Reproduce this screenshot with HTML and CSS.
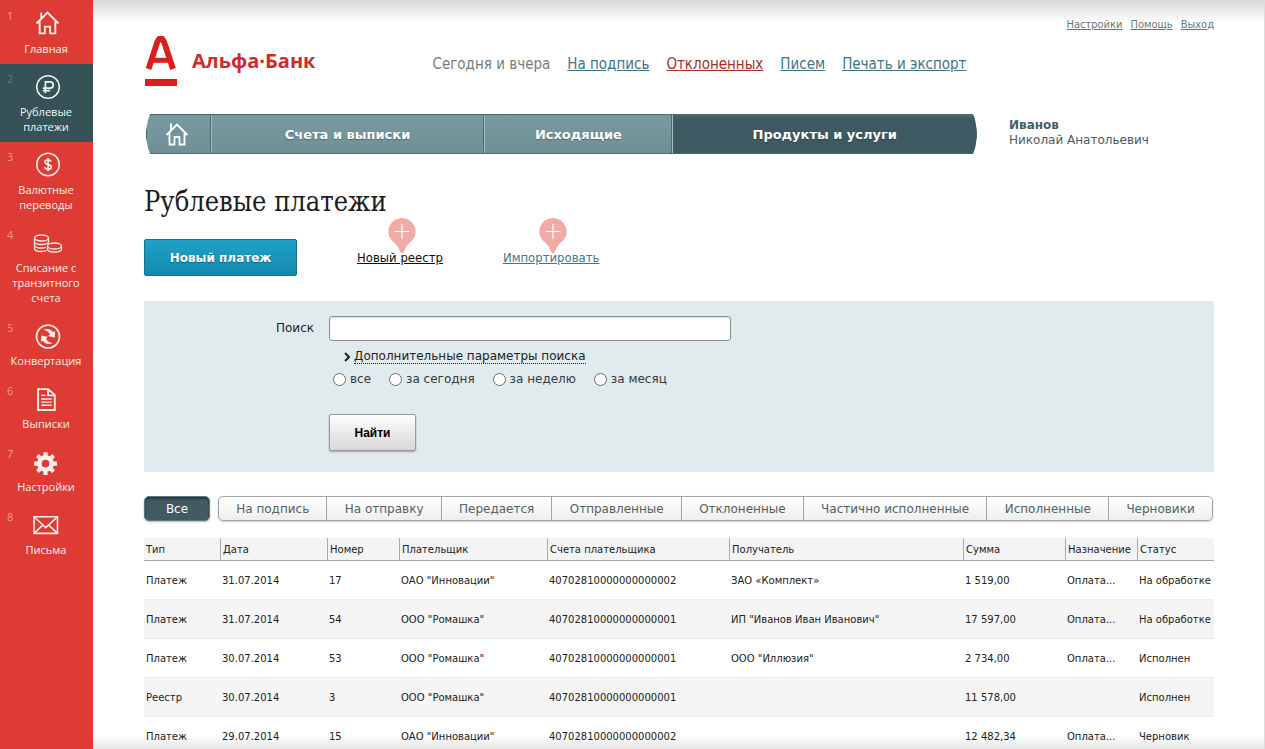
FILE: index.html
```html
<!DOCTYPE html>
<html lang="ru">
<head>
<meta charset="utf-8">
<title>Рублевые платежи</title>
<link rel="stylesheet" href="styles.css">
</head>
<body>
<div class="app">
  <nav class="sidebar" aria-label="Разделы">
    <a class="side-item" href="#"><span class="side-num">1</span>
      <svg class="side-icon" viewBox="0 0 24 24"><path d="M1.500 12 12 1.500 22.500 12M6 7V1.500M4.500 10v11.500h5V15h5v6.500h5V10" fill="none" stroke="currentColor" stroke-width="1.800"/></svg>
      Главная</a>
    <a class="side-item side-item-active" href="#"><span class="side-num">2</span>
      <svg class="side-icon" viewBox="0 0 24 24"><g fill="none" stroke="currentColor"><circle cx="12.500" cy="12.500" r="10.800" stroke-width="1.400"/><path d="M10 18.500v-11h4.500a2.900 2.900 0 0 1 0 6h-7M7.500 16h7" stroke-width="1.600"/></g></svg>
      Рублевые платежи</a>
    <a class="side-item" href="#"><span class="side-num">3</span>
      <svg class="side-icon" viewBox="0 0 24 24"><g fill="none" stroke="currentColor"><circle cx="12.500" cy="12" r="10.800" stroke-width="1.400"/><path d="M15.500 9.300C15 8 14 7.500 12.500 7.500c-1.800 0-3 .8-3 2.200 0 3.200 6.200 1.400 6.200 4.600 0 1.400-1.300 2.200-3.200 2.200-1.700 0-2.900-.6-3.300-2M12.500 5.500v13" stroke-width="1.600"/></g></svg>
      Валютные переводы</a>
    <a class="side-item" href="#"><span class="side-num">4</span>
      <svg class="side-icon side-icon-wide" viewBox="0 0 30 24"><g fill="none" stroke="currentColor" stroke-width="1.300"><ellipse cx="8.500" cy="7.500" rx="7" ry="3"/><path d="M1.500 7.500V11c0 1.700 3.100 3 7 3s7-1.300 7-3V7.500M1.500 11v3.500c0 1.700 3.100 3 7 3 1.700 0 3.300-.3 4.500-.7M1.500 14.500V18c0 1.700 3.100 3 7 3 2 0 3.700-.4 5-1M15.500 11v2"/><ellipse cx="21.500" cy="15.500" rx="7" ry="3"/><path d="M14.500 15.500v3c0 1.700 3.100 3 7 3s7-1.300 7-3v-3"/></g></svg>
      Списание с транзитного счета</a>
    <a class="side-item" href="#"><span class="side-num">5</span>
      <svg class="side-icon" viewBox="0 -1 24 24"><circle cx="12.500" cy="12" r="11" fill="none" stroke="currentColor" stroke-width="1.600"/><path d="M8 5.500c4.500-1.500 8-.2 9.300 2.500l2-1-.3 6-6.500-1.500 2-1.300C13.500 7.800 11.500 6.500 8 5.500ZM17 18.500c-4.500 1.500-8 .2-9.300-2.500l-2 1 .3-6 6.500 1.500-2 1.300c1 2.400 3 3.700 6.500 4.700Z" fill="currentColor"/></svg>
      Конвертация</a>
    <a class="side-item" href="#"><span class="side-num">6</span>
      <svg class="side-icon" viewBox="-1 -1 24 24"><path d="M2 2h9.500L18 7.500V22H2ZM11.500 2v6H18" fill="none" stroke="currentColor" stroke-width="1.800"/><path d="M5 8h4M5 11.500h10M5 14.500h10M5 17.500h10" stroke="currentColor" stroke-width="1.300"/></svg>
      Выписки</a>
    <a class="side-item" href="#"><span class="side-num">7</span>
      <svg class="side-icon side-icon-left" viewBox="0 0 24 24"><circle cx="12" cy="14" r="5.900" fill="none" stroke="currentColor" stroke-width="4.400"/><path d="M12 3v4M12 21v4M1 14h4M19 14h4M4.300 6.300l2.800 2.800M16.900 18.900l2.800 2.800M4.300 21.700l2.800-2.800M16.900 9.100l2.800-2.800" stroke="currentColor" stroke-width="4"/></svg>
      Настройки</a>
    <a class="side-item" href="#"><span class="side-num">8</span>
      <svg class="side-icon side-icon-left" viewBox="0 0 24 24"><path d="M1 4.500h22.500v16H1ZM1.500 5l10.750 10L23 5M1.500 20l8-7.500M23 20l-8-7.500" fill="none" stroke="currentColor" stroke-width="1.500"/></svg>
      Письма</a>
  </nav>

  <main class="main">
    <div class="utility">
      <a href="#">Настройки</a><a href="#">Помощь</a><a href="#">Выход</a>
    </div>

    <header class="brand-row">
      <a class="brand" href="#">
        <svg class="brand-mark" viewBox="0 0 34 50" aria-hidden="true"><g fill="none" stroke="#db1f1f"><path d="M4.500 33 13.300 6Q16.700-2 20.100 6L29 33" stroke-width="5.800" stroke-linejoin="round"/><path d="M8 24.300h17" stroke-width="5"/></g><path d="M1 43h32v7H1Z" fill="#db1f1f"/></svg>
        <span class="brand-name">Альфа·Банк</span>
      </a>
      <div class="summary">
        <span>Сегодня и вчера</span>
        <a href="#">На подпись</a>
        <a class="summary-alert" href="#">Отклоненных</a>
        <a href="#">Писем</a>
        <a href="#">Печать и экспорт</a>
      </div>
    </header>

    <div class="nav-row">
      <nav class="topnav" aria-label="Главное меню">
        <a class="topnav-item topnav-home" href="#" aria-label="Главная"><svg class="home-icon" viewBox="0 0 24 24"><path d="M1.500 13 12 2.500 22.500 13M6 8V1.500M4.500 11v11.500h5V15h5v7.500h5V11" fill="none" stroke="currentColor" stroke-width="1.800"/></svg></a>
        <a class="topnav-item topnav-accounts" href="#">Счета и выписки</a>
        <a class="topnav-item topnav-outgoing" href="#">Исходящие</a>
        <a class="topnav-item topnav-products" href="#">Продукты и услуги</a>
      </nav>
      <div class="user"><strong>Иванов</strong><span>Николай Анатольевич</span></div>
    </div>

    <h1 class="title">Рублевые платежи</h1>

    <div class="actions">
      <button class="btn-primary" type="button">Новый платеж</button>
      <a class="action action-dark" href="#">Новый реестр
        <svg class="pin" viewBox="0 0 28 36"><path d="M14 0a13.500 13.500 0 0 1 8 24.500c-3 2.500-5 5.500-6 9q-2 3.500-4 0c-1-3.500-3-6.500-6-9A13.500 13.500 0 0 1 14 0Z" fill="#f1aba7"/><path d="M6.500 13.500h15M14 6v15" stroke="#fff" stroke-width="1.200"/></svg></a>
      <a class="action" href="#">Импортировать
        <svg class="pin" viewBox="0 0 28 36"><path d="M14 0a13.500 13.500 0 0 1 8 24.500c-3 2.500-5 5.500-6 9q-2 3.500-4 0c-1-3.500-3-6.500-6-9A13.500 13.500 0 0 1 14 0Z" fill="#f1aba7"/><path d="M6.500 13.500h15M14 6v15" stroke="#fff" stroke-width="1.200"/></svg></a>
    </div>

    <form class="search">
      <label class="search-label" for="q">Поиск</label>
      <div class="search-fields">
        <input class="search-input" id="q" type="text">
        <a class="more" href="#"><svg class="chevron" viewBox="0 0 6 10"><path d="m1 1 4 4-4 4" fill="none" stroke="currentColor" stroke-width="2"/></svg><span class="more-text">Дополнительные параметры поиска</span></a>
        <div class="radios">
          <label class="radio"><input type="radio" name="period">все</label>
          <label class="radio"><input type="radio" name="period">за сегодня</label>
          <label class="radio"><input type="radio" name="period">за неделю</label>
          <label class="radio"><input type="radio" name="period">за месяц</label>
        </div>
        <button class="btn-find" type="button">Найти</button>
      </div>
    </form>

    <div class="tabs">
      <button class="tab-all" type="button">Все</button>
      <div class="tab-group">
        <button class="tab" type="button">На подпись</button>
        <button class="tab" type="button">На отправку</button>
        <button class="tab" type="button">Передается</button>
        <button class="tab" type="button">Отправленные</button>
        <button class="tab" type="button">Отклоненные</button>
        <button class="tab" type="button">Частично исполненные</button>
        <button class="tab" type="button">Исполненные</button>
        <button class="tab" type="button">Черновики</button>
      </div>
    </div>

    <table class="payments">
      <colgroup><col class="c-type"><col class="c-date"><col class="c-num"><col class="c-payer"><col class="c-account"><col class="c-payee"><col class="c-sum"><col class="c-purpose"><col class="c-status"></colgroup>
      <thead>
        <tr><th>Тип</th><th>Дата</th><th>Номер</th><th>Плательщик</th><th>Счета плательщика</th><th>Получатель</th><th>Сумма</th><th>Назначение</th><th>Статус</th></tr>
      </thead>
      <tbody>
        <tr><td>Платеж</td><td>31.07.2014</td><td>17</td><td>ОАО "Инновации"</td><td>40702810000000000002</td><td>ЗАО «Комплект»</td><td>1 519,00</td><td>Оплата...</td><td>На обработке</td></tr>
        <tr><td>Платеж</td><td>31.07.2014</td><td>54</td><td>ООО "Ромашка"</td><td>40702810000000000001</td><td>ИП "Иванов Иван Иванович"</td><td>17 597,00</td><td>Оплата...</td><td>На обработке</td></tr>
        <tr><td>Платеж</td><td>30.07.2014</td><td>53</td><td>ООО "Ромашка"</td><td>40702810000000000001</td><td>ООО "Иллюзия"</td><td>2 734,00</td><td>Оплата...</td><td>Исполнен</td></tr>
        <tr><td>Реестр</td><td>30.07.2014</td><td>3</td><td>ООО "Ромашка"</td><td>40702810000000000001</td><td></td><td>11 578,00</td><td></td><td>Исполнен</td></tr>
        <tr><td>Платеж</td><td>29.07.2014</td><td>15</td><td>ОАО "Инновации"</td><td>40702810000000000002</td><td></td><td>12 482,34</td><td>Оплата...</td><td>Черновик</td></tr>
      </tbody>
    </table>
  </main>
</div>
</body>
</html>
```
FILE: styles.css
```css
* { box-sizing: border-box; }
body { margin: 0; background: #fff; font-family: "DejaVu Sans", Verdana, sans-serif; font-size: 12px; color: #222; }
button, input { font: inherit; }

.app { display: flex; height: 100vh; overflow: hidden; }

/* Sidebar */
.sidebar { flex: 0 0 93px; padding-top: 1px; background: #de3b35; }
.side-item { position: relative; display: block; padding: 10px 5px 8px 4px; color: #fdeeea; font: 11px/15px "Open Sans", sans-serif; text-align: center; text-decoration: none; }
.side-item-active { background: #365257; color: #eef6f6; }
.side-icon { display: block; width: 25px; height: 25px; margin: 0 auto 5px 31px; overflow: visible; }
.side-icon-wide { width: 30px; margin-left: 29px; }
.side-icon-left { margin-left: 29px; }
.side-num { position: absolute; left: 7px; top: 7px; color: #f29a8f; }
.side-item-active .side-num { color: #5d7f83; }

/* Main column */
.main { position: relative; flex: 1; min-width: 0; padding: 18px 50px 0 51px; background: linear-gradient(#dadada, #dedede 4px, #fff 22px); border-right: 1px solid #dcdcdc; }
.main::after { content: ""; position: absolute; left: 0; right: 0; bottom: 0; height: 14px; background: linear-gradient(rgba(0, 0, 0, 0), rgba(0, 0, 0, .1)); }

.utility { display: flex; justify-content: flex-end; gap: 8px; font-family: "DejaVu Sans Condensed", "DejaVu Sans", sans-serif; font-size: 11px; line-height: 14px; }
.utility a { color: #66777a; }

.brand-row { display: flex; align-items: flex-end; height: 54px; gap: 117px; }
.brand { display: flex; align-items: center; gap: 14px; color: #d22b2b; text-decoration: none; }
.brand-mark { width: 34px; height: 50px; }
.brand-name { font: bold 20px/24px "Open Sans", sans-serif; }
.summary { display: flex; gap: 17px; padding-bottom: 13px; font-family: "DejaVu Sans Condensed", "DejaVu Sans", sans-serif; font-size: 15px; line-height: 18px; color: #7d7d7d; white-space: nowrap; }
.summary a { color: #3f7689; }
.summary .summary-alert { color: #a83229; }

.nav-row { display: flex; gap: 32px; margin-top: 28px; padding-left: 2px; }
.topnav { flex: 1; display: flex; height: 40px; border: 1px solid #4d6a70; background: linear-gradient(#789a9f, #6e9096); clip-path: polygon(4px 0, 2px 15%, 1px 28%, 0 42%, 0 58%, 1px 72%, 2px 85%, 4px 100%, calc(100% - 4px) 100%, calc(100% - 2px) 85%, calc(100% - 1px) 72%, 100% 58%, 100% 42%, calc(100% - 1px) 28%, calc(100% - 2px) 15%, calc(100% - 4px) 0); }
.topnav-item { display: flex; align-items: center; justify-content: center; border-left: 1px solid #a5bcc0; border-right: 1px solid #4d6a70; color: #fff; font-size: 13px; font-weight: bold; text-decoration: none; text-shadow: 0 1px 1px rgba(0, 0, 0, .3); }
.topnav-home { flex: 61; border-left: 0; padding-right: 2px; }
.topnav-accounts { flex: 273; }
.topnav-outgoing { flex: 187; }
.topnav-products { flex: 304; border-right: 0; background: linear-gradient(#4e686e, #3d5a62 4px); }
.home-icon { width: 24px; height: 24px; }
.user { flex: 0 0 205px; display: flex; flex-direction: column; padding-top: 4px; font-size: 12px; line-height: 15px; color: #46605f; }

.title { margin: 29px 0 19px; font: 27px/37px "DejaVu Serif Condensed", "DejaVu Serif", serif; color: #1c1c1c; }

.actions { display: flex; align-items: center; }
.btn-primary { width: 153px; height: 37px; padding: 0; border: 1px solid #14728f; border-radius: 2px; background: linear-gradient(#1fa1c8, #1589b0); color: #fff; font-size: 12px; font-weight: bold; text-shadow: 0 1px 1px rgba(0, 0, 0, .3); }
.action { position: relative; margin-left: 60px; color: #41798c; font-family: "DejaVu Sans Condensed", "DejaVu Sans", sans-serif; font-size: 13px; line-height: 16px; }
.action-dark { color: #111; }
.pin { position: absolute; left: calc(50% - 12px); top: -32px; width: 28px; height: 36px; }

/* Search */
.search { display: flex; gap: 15px; margin-top: 25px; padding: 15px 0 21px; background: #e1eaed; }
.search-label { flex: 0 0 170px; text-align: right; line-height: 24px; }
.search-fields { flex: 0 1 402px; min-width: 0; }
.search-input { display: block; width: 100%; height: 25px; border: 1px solid #8b9294; border-radius: 3px; background: #fff; box-shadow: inset 0 1px 2px rgba(0, 0, 0, .15); }
.more { display: flex; align-items: center; gap: 4px; margin: 8px 0 0 15px; color: #1c2226; line-height: 14px; text-decoration: none; }
.more-text { border-bottom: 1px dotted #1c2226; }
.chevron { width: 6px; height: 10px; }
.radios { display: flex; gap: 18px; margin: 7px 0 0 4px; }
.radio { display: flex; align-items: center; gap: 4px; line-height: 16px; color: #333c40; white-space: nowrap; }
.radio input { appearance: none; width: 13px; height: 13px; margin: 0; border: 1px solid #6d6d6d; border-radius: 50%; background: #fff; }
.radio input:checked { box-shadow: inset 0 0 0 3px #fff; background: #444; }
.btn-find { display: block; width: 87px; height: 37px; margin-top: 27px; padding: 0; border: 1px solid #9a9a9a; border-radius: 2px; background: linear-gradient(#fdfdfd, #d8d8d8); box-shadow: 0 1px 2px rgba(0, 0, 0, .3); color: #000; font: bold 12px "Liberation Sans", sans-serif; }

/* Tabs */
.tabs { display: flex; gap: 8px; margin-top: 24px; padding-right: 1px; }
.tab-all { flex: 0 0 66px; padding: 0; border: 1px solid #5f777b; border-radius: 5px; background: #425b62; box-shadow: inset 0 2px 2px #26383d, 0 1px 2px rgba(0, 0, 0, .3); color: #fff; }
.tab-group { flex: 1; display: flex; height: 25px; border: 1px solid #a3a3a3; border-radius: 5px; background: linear-gradient(#fff, #eee); box-shadow: 0 1px 2px rgba(0, 0, 0, .2); }
.tab { flex: 1 1 auto; padding: 0; border: 0; border-right: 1px solid #a3a3a3; background: none; color: #546361; white-space: nowrap; }
.tab:last-child { border-right: 0; }

/* Payments table */
.payments { width: 100%; margin-top: 17px; border-collapse: separate; border-spacing: 0; table-layout: fixed; font-size: 10px; }
.payments th { height: 23px; padding: 0 0 0 2px; border-left: 1px solid #a9a9a9; border-bottom: 1px solid #a9a9a9; background: #f4f4f4; font-weight: normal; text-align: left; white-space: nowrap; }
.payments th:first-child { border-left: 0; }
.payments td { height: 39px; padding: 0 0 0 2px; border-bottom: 1px solid #ececec; white-space: nowrap; }
.payments tbody tr:nth-child(even) { background: #f5f5f5; }
.c-type { width: 76px; }
.c-date { width: 107px; }
.c-num { width: 72px; }
.c-payer { width: 148px; }
.c-account { width: 182px; }
.c-payee { width: 234px; }
.c-sum { width: 102px; }
.c-purpose { width: 72px; }
.c-status { width: 77px; }
```
